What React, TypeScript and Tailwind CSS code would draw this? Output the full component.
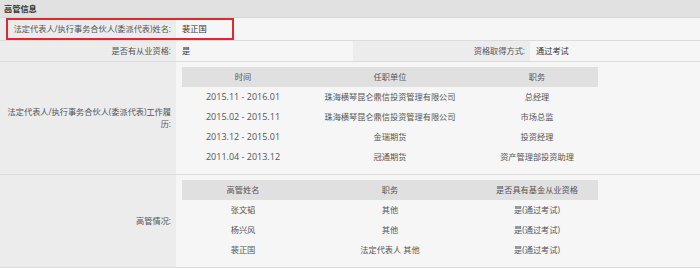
const font = { fontFamily: '"Open Sans", "Noto Sans CJK SC", sans-serif' }

const history = [
  ['2015.11 - 2016.01', '珠海横琴昆仑鼎信投资管理有限公司', '总经理'],
  ['2015.02 - 2015.11', '珠海横琴昆仑鼎信投资管理有限公司', '市场总监'],
  ['2013.12 - 2015.01', '金瑞期货', '投资经理'],
  ['2011.04 - 2013.12', '冠通期货', '资产管理部投资助理'],
]

const managers = [
  ['张文韬', '其他', '是(通过考试)'],
  ['杨兴风', '其他', '是(通过考试)'],
  ['裴正国', '法定代表人 其他', '是(通过考试)'],
]

function InnerTable({ head, rows }: { head: string[]; rows: string[][] }) {
  return (
    <div className="grid w-[416px] grid-cols-[122px_172px_122px] text-center text-[#555]">
      {head.map((h) => (
        <div key={h} className="flex h-5 items-center justify-center bg-[#e0e0e0]">
          {h}
        </div>
      ))}
      {rows.map((r, i) =>
        r.map((c, j) => (
          <div key={i + '-' + j} className={`flex h-5 items-center justify-center ${j === 0 && /\d/.test(c) ? 'text-[9px]' : ''}`}>
            {c}
          </div>
        ))
      )}
    </div>
  )
}

export default function App() {
  const label = 'flex items-center justify-end bg-[#ececec] pl-1 pr-[5px] text-right text-[#555]'
  const value = 'flex items-center bg-[#f6f6f6] pl-[6px] text-[#333]'

  return (
    <div className="relative h-[268px] w-[700px] overflow-hidden bg-[#f6f6f6] text-[8.2px] leading-[12px]" style={font}>
      <div className="flex h-[18px] items-center border-b border-[#d6d6d6] bg-[#e1e1e1] pl-1 font-bold text-[#333]">
        高管信息
      </div>

      <div className="grid grid-cols-[176px_177px_177px_1fr] [&>div]:border-b [&>div]:border-[#dcdcdc]">
        <div className={`${label} h-[23px]`}>法定代表人/执行事务合伙人(委派代表)姓名:</div>
        <div className={`${value} col-span-3 h-[23px]`}>裴正国</div>

        <div className={`${label} h-[21px]`}>是否有从业资格:</div>
        <div className={`${value} h-[21px]`}>是</div>
        <div className={`${label} h-[21px]`}>资格取得方式:</div>
        <div className={`${value} h-[21px]`}>通过考试</div>

        <div className={label}>法定代表人/执行事务合伙人(委派代表)工作履历:</div>
        <div className={`${value} col-span-3 pb-[7px] pt-[5px]`}>
          <InnerTable head={['时间', '任职单位', '职务']} rows={history} />
        </div>

        <div className={label}>高管情况:</div>
        <div className={`${value} col-span-3 pb-[7px] pt-[5px]`}>
          <InnerTable head={['高管姓名', '职务', '是否具有基金从业资格']} rows={managers} />
        </div>
      </div>

      <div className="absolute left-[6px] top-[18px] h-[22px] w-[228px] border-2 border-[#e0282e]" />
    </div>
  )
}
